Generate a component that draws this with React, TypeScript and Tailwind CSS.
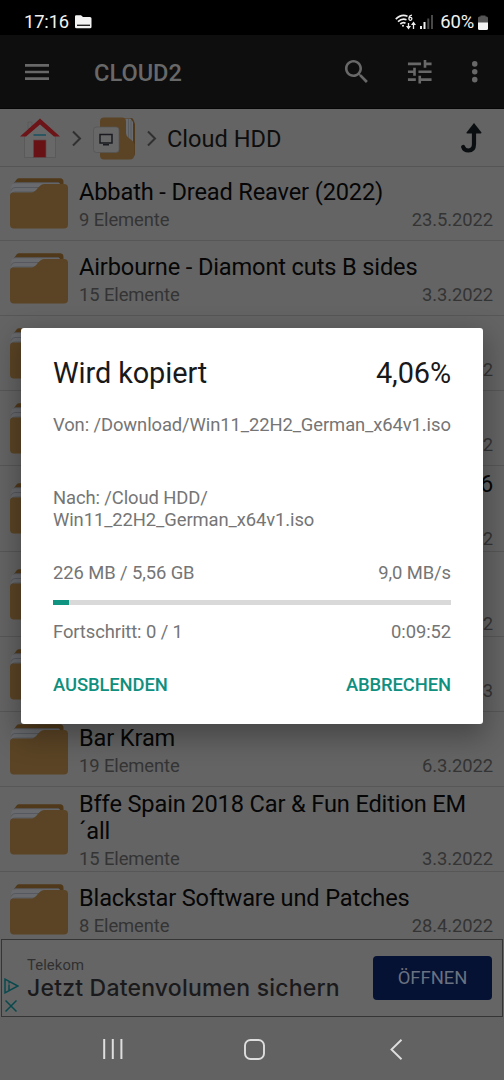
import React from "react";

type Entry = { title: string[]; count: string; date: string; height: string; alignEnd?: boolean };

const entries: Entry[] = [
  { title: ["Abbath - Dread Reaver (2022)"], count: "9 Elemente", date: "23.5.2022", height: "h-[74px]" },
  { title: ["Airbourne - Diamont cuts B sides"], count: "15 Elemente", date: "3.3.2022", height: "h-[75px]" },
  { title: [""], count: "", date: "2", height: "h-[75px]" },
  { title: [""], count: "", date: "2", height: "h-[75px]" },
  { title: ["6", ""], count: "", date: "2", height: "h-[86px]", alignEnd: true },
  { title: ["", ""], count: "", date: "2", height: "h-[85px]" },
  { title: [""], count: "", date: "3", height: "h-[75px]" },
  { title: ["Bar Kram"], count: "19 Elemente", date: "6.3.2022", height: "h-[75px]" },
  { title: ["Bffe Spain 2018 Car & Fun Edition EM", "´all"], count: "15 Elemente", date: "3.3.2022", height: "h-[85px]" },
  { title: ["Blackstar Software und Patches"], count: "8 Elemente", date: "28.4.2022", height: "h-[75px]" },
];

function FolderIcon() {
  return (
    <svg className="h-[51px] w-[58px] shrink-0" viewBox="0 0 58 51">
      <path d="M4 5 L7 1 Q7.600 .3 9 .3 H50 Q53.500 .3 53.500 4 V8 H4Z" fill="#50391a" />
      <path d="M1.200 17 V8.500 Q1.500 5.500 5 4.500 H48 Q50 4.500 50.500 7 H34 L27 17Z" fill="#686a6d" />
      <path d="M1.200 12.500 Q2 9.500 5 9.500 H31 M1.200 16 Q2 14 5 14 H27" fill="none" stroke="#50545a" strokeWidth=".8" />
      <path d="M3.500 5.600 Q4 4.700 6 4.700 H49" fill="none" stroke="#50545a" strokeWidth=".7" />
      <path d="M0 18 Q0 14.600 3.500 14.600 H21 C27 14.600 28 6 35 6 H54 Q58 6 58 10 V46.500 Q58 50.600 54 50.600 H4 Q0 50.600 0 46.500Z" fill="#5b4425" />
    </svg>
  );
}

function Row({ e }: { e: Entry }) {
  return (
    <div className={`flex shrink-0 items-center gap-[11px] border-b border-[#575757] pr-[11px] pl-[10px] ${e.height}`}>
      <FolderIcon />
      <div className="flex min-w-0 flex-1 flex-col gap-[3px] pt-[2px]">
        <div className={`text-[23.6px] leading-[27px] tracking-[-0.140px] whitespace-nowrap text-[#060606] ${e.alignEnd ? "text-right" : ""}`}>
          {e.title.map((t, i) => (
            <div key={i} className="h-[27px]">{t}</div>
          ))}
        </div>
        <div className="flex h-[21px] justify-between text-[18.4px] leading-[21px] tracking-[-0.100px] text-[#343434]">
          <span>{e.count}</span>
          <span>{e.date}</span>
        </div>
      </div>
    </div>
  );
}

function StatusBar() {
  return (
    <div className="flex h-[35px] shrink-0 items-center bg-black pt-[9px] pr-[16px] pl-[24px] text-[18.4px] leading-[26px] tracking-[-0.150px] text-[#f2f2f2]">
      <span>17:16</span>
      <svg className="ml-[6px] h-[14px] w-[17px]" viewBox="0 0 17 14">
        <path d="M0 1.500 Q0 .3 1.200 .3 H6 L8 2 H15 Q16.500 2 16.500 3.500 V12 Q16.500 13.300 15 13.300 H1.500 Q0 13.300 0 12Z" fill="#f2f2f2" />
        <path d="M2 9.600H15V11H2Z" fill="#222" />
      </svg>
      <svg className="ml-auto h-[17px] w-[21px]" viewBox="0 0 21 17" fill="none" stroke="#eee" strokeWidth="1.700">
        <path d="M.8 5.200 Q6 -.3 12.500 2.200 M3 7.700 Q7 4 11.500 5.800 M5.300 10 Q8 7.800 10.500 9.200" />
        <circle cx="8" cy="11.700" r="1" fill="#eee" stroke="none" />
        <path d="M17 1.200 Q13.800 1.500 13.900 5 M13.900 4.800 a1.500 1.500 0 1 0 3 0 a1.500 1.500 0 1 0 -3 0" strokeWidth="1.300" />
        <path d="M13.500 9v5 M18.500 15v-5" strokeWidth="1.300" />
        <path d="M11 12h5l-2.500 3.600zM16 11h5l-2.500-3.500z" fill="#eee" stroke="none" />
      </svg>
      <svg className="ml-[4px] h-[14px] w-[14px]" viewBox="0 0 14 14">
        <path d="M0 11h2v3H0zM3.500 7h2v7h-2z" fill="#eee" />
        <path d="M7.300 3.500h2V14h-2zM11 0h2v14h-2z" fill="#484848" />
      </svg>
      <span className="ml-[6px]">60%</span>
      <svg className="ml-[4px] h-[15px] w-[10px]" viewBox="0 0 10 15">
        <path d="M2.500 1.500 V.5 H7.500 V1.500 H8.500 Q10 1.500 10 3 V8H0V3Q0 1.500 1.500 1.500Z" fill="#555" />
        <path d="M0 7.500H10V13.500Q10 15 8.500 15H1.500Q0 15 0 13.500Z" fill="#f2f2f2" />
      </svg>
    </div>
  );
}

function AppBar() {
  return (
    <div className="flex h-[74px] shrink-0 items-center border-b border-[#060606] bg-[#0e0e0e] pl-[21px] text-[#686868]">
      <svg className="h-[32px] w-[32px]" viewBox="0 0 24 24" fill="currentColor">
        <path d="M3 18h18v-2H3v2zm0-5h18v-2H3v2zm0-7v2h18V6H3z" />
      </svg>
      <span className="ml-[41px] pt-[2px] text-[23.6px] leading-[28px] font-medium">CLOUD2</span>
      <svg className="ml-auto size-[31.5px]" viewBox="0 0 24 24" fill="currentColor">
        <path d="M15.500 14h-.79l-.28-.27C15.410 12.590 16 11.110 16 9.500 16 5.910 13.090 3 9.500 3S3 5.910 3 9.500 5.910 16 9.500 16c1.610 0 3.090-.59 4.230-1.570l.27.28v.79l5 4.990L20.490 19l-4.990-5zm-6 0C7.010 14 5 11.990 5 9.500S7.010 5 9.500 5 14 7.010 14 9.500 11.990 14 9.500 14z" />
      </svg>
      <svg className="ml-[31.500px] size-[31.5px]" viewBox="0 0 24 24" fill="currentColor">
        <path d="M3 17v2h6v-2H3zM3 5v2h10V5H3zm10 16v-2h8v-2h-8v-2h-2v6h2zM7 9v2H3v2h4v2h2V9H7zm14 4v-2H11v2h10zm-6-4h2V7h4V5h-4V3h-2v6z" />
      </svg>
      <svg className="mr-[13.500px] ml-[24px] size-[31.5px]" viewBox="0 0 24 24" fill="currentColor">
        <circle cx="12" cy="6" r="2.100" />
        <circle cx="12" cy="12" r="2.100" />
        <circle cx="12" cy="18" r="2.100" />
      </svg>
    </div>
  );
}

function Chevron() {
  return (
    <svg className="h-[17px] w-[10px]" viewBox="0 0 10 17" fill="none" stroke="#303030" strokeWidth="2">
      <path d="M1 1.500 L8 8.500 L1 15.500" />
    </svg>
  );
}

function PathBar() {
  return (
    <div className="flex h-[58px] shrink-0 items-center border-b border-[#555] pt-[1px] pl-[20px]">
      <svg className="h-[41px] w-[40px]" viewBox="0 0 40 41">
        <path d="M8 4h4v7H8z" fill="#646464" stroke="#555" strokeWidth=".6" />
        <path d="M4.500 17 L20 4.500 L35.500 17 V39.500 H4.500Z" fill="#686868" stroke="#575757" strokeWidth=".8" />
        <path d="M20 .5 L40 18.500 H34 L20 6.500 L6 18.500 H0Z" fill="#6c1418" />
        <path d="M13.500 22 H26 V39.500 H13.500Z" fill="#681216" stroke="#60494a" strokeWidth=".7" />
        <path d="M13.500 16H26V18H13.500Z" fill="#2b5661" />
      </svg>
      <div className="ml-[12px]"><Chevron /></div>
      <svg className="ml-[11px] h-[43px] w-[43px]" viewBox="0 0 43 43">
        <path d="M30 1 H38 Q40 1 40.500 3 L42 7 V36 Q42 40 38 41 H30Z" fill="#50391a" />
        <path d="M31 1.500 H37.500 L40 5 V33 L32 20Z" fill="#686a6d" />
        <path d="M35.500 2 V25 M38 3 V27" stroke="#50545a" strokeWidth=".7" />
        <path d="M11 .5 H29 Q33 .5 33 4.500 V16 C33 22 41 22 41.500 28 V37 Q41.500 42.500 36.500 42.500 H11 Q7 42.500 7 38.500 V4.500 Q7 .5 11 .5Z" fill="#5b4425" />
        <rect x=".5" y="10" width="25.500" height="25.500" rx="3" fill="#676767" stroke="#555" strokeWidth=".7" />
        <path d="M7 17.500H19V26H7Z" fill="none" stroke="#191b20" strokeWidth="1.500" />
        <path d="M10 27h6v1.500h-6z" fill="#191b20" />
      </svg>
      <div className="ml-[11px]"><Chevron /></div>
      <span className="ml-[10px] pt-[1px] text-[23.6px] leading-[28px] text-[#0e0e0e]">Cloud HDD</span>
      <svg className="mr-[22px] ml-auto h-[31px] w-[21px]" viewBox="0 0 21 31">
        <path d="M13 9 V21 Q13 27.500 7.500 27.500 Q3.200 27.500 2.200 24" fill="none" stroke="#0b0e11" strokeWidth="4.200" strokeLinecap="round" />
        <path d="M13 0 L20.500 9.500 Q20.500 10.500 19.500 10.500 H6.500 Q5 10.500 5.500 9.500Z" fill="#0b0e11" />
      </svg>
    </div>
  );
}

function AdBanner() {
  return (
    <div className="mx-px flex h-[78px] shrink-0 items-center border border-[#353535] bg-[#656565]">
      <div className="flex w-[18px] flex-col gap-[6px] self-end pb-[4px] pl-[2px]">
        <svg className="h-[16px] w-[15px]" viewBox="0 0 15 16" fill="none" stroke="#08494e" strokeWidth="1.500">
          <path d="M1 1.200 L13.800 8 L1 14.800Z M5 6.500v5.500 M5 4.200v1.300" />
        </svg>
        <svg className="ml-px h-[12px] w-[12px]" viewBox="0 0 12 12" stroke="#08494e" strokeWidth="1.500">
          <path d="M.5 .5 L11.500 11.500 M11.500 .5 L.5 11.500" />
        </svg>
      </div>
      <div className="flex flex-1 flex-col pl-[7px]">
        <span className="text-[14.800px] leading-[18px] tracking-[0.100px] text-[#303030]">Telekom</span>
        <span className="mt-px font-['Inter','Roboto',sans-serif] text-[23px] leading-[26px] font-medium tracking-[0.200px] whitespace-nowrap text-[#1a1a1c]">
          Jetzt Datenvolumen sichern
        </span>
      </div>
      <div className="mr-[10px] flex h-[44px] w-[119px] items-center justify-center rounded-[4px] bg-[#051233] pb-[1px] text-[18.400px] text-[#6a7180]">
        ÖFFNEN
      </div>
    </div>
  );
}

function NavBar() {
  return (
    <div className="flex h-[63px] shrink-0 items-center bg-[#626262] pt-[1px] pl-[103px]">
      <svg className="h-[20px] w-[20px]" viewBox="0 0 20 20" fill="#dedede">
        <path d="M.2 0h2v20h-2zM8.800 0h2v20h-2zM17.400 0h2v20h-2z" />
      </svg>
      <svg className="ml-[120.500px] h-[21px] w-[21px]" viewBox="0 0 21 21" fill="none" stroke="#dedede" strokeWidth="1.900">
        <rect x="1" y="1" width="19" height="19" rx="5.500" />
      </svg>
      <svg className="ml-[125px] h-[21px] w-[13px]" viewBox="0 0 13 21" fill="none" stroke="#dedede" strokeWidth="1.900">
        <path d="M11.500 .8 L1.500 10.500 L11.500 20.200" />
      </svg>
    </div>
  );
}

function CopyDialog() {
  return (
    <div className="absolute top-[328px] left-[21px] flex h-[396px] w-[462px] flex-col rounded-[3px] bg-white px-[32px] pt-[27.5px] text-[18.4px] leading-[21.5px] tracking-[-0.095px] text-[#757575] shadow-[0_10px_28px_3px_rgba(0,0,0,0.3)]">
      <div className="flex h-[34px] justify-between text-[28.9px] leading-[34px] text-[#191919]">
        <span>Wird kopiert</span>
        <span>4,06%</span>
      </div>
      <div className="mt-[24.5px] h-[43px] whitespace-nowrap">Von: /Download/Win11_22H2_German_x64v1.iso</div>
      <div className="mt-[30px] h-[43px]">
        Nach: /Cloud HDD/
        <br />
        Win11_22H2_German_x64v1.iso
      </div>
      <div className="mt-[32px] flex justify-between">
        <span>226 MB / 5,56 GB</span>
        <span>9,0 MB/s</span>
      </div>
      <div className="mt-[16.5px] h-[5px] shrink-0 bg-[#d9d9d9]">
        <div className="h-full w-[16px] bg-[#0f9482]" />
      </div>
      <div className="mt-[16px] flex justify-between">
        <span>Fortschritt: 0 / 1</span>
        <span>0:09:52</span>
      </div>
      <div className="mt-[31px] flex justify-between font-medium text-[#0f8f7e]">
        <span>AUSBLENDEN</span>
        <span>ABBRECHEN</span>
      </div>
    </div>
  );
}

export default function App() {
  return (
    <div className="relative flex h-[1080px] w-[504px] flex-col overflow-hidden bg-[#646464] font-['Roboto','Liberation_Sans',sans-serif]">
      <StatusBar />
      <AppBar />
      <PathBar />
      <div className="flex h-[772px] shrink-0 flex-col overflow-hidden">
        {entries.map((e, i) => (
          <Row key={i} e={e} />
        ))}
      </div>
      <AdBanner />
      <NavBar />
      <CopyDialog />
    </div>
  );
}
